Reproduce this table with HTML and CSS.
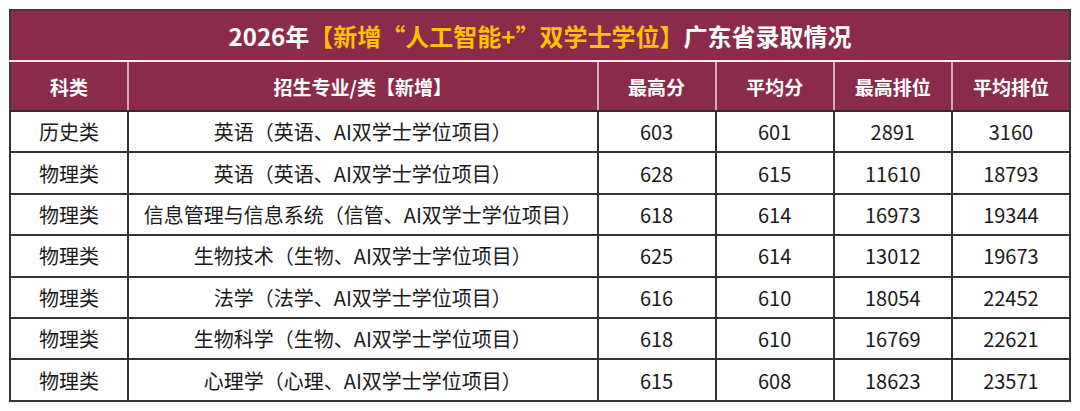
FILE: index.html
```html
<!DOCTYPE html>
<html lang="zh-CN">
<head>
<meta charset="utf-8">
<title>2026年录取情况</title>
<link rel="stylesheet" href="styles.css">
</head>
<body>
<table class="sheet">
  <colgroup>
    <col class="c-kind">
    <col class="c-major">
    <col class="c-num">
    <col class="c-num">
    <col class="c-num">
    <col class="c-num">
  </colgroup>
  <thead>
    <tr class="title-row">
      <th colspan="6" class="title">2026年<span class="hl">【新增“人工智能+”双学士学位】</span>广东省录取情况</th>
    </tr>
    <tr class="head-row">
      <th>科类</th>
      <th>招生专业/类【新增】</th>
      <th>最高分</th>
      <th>平均分</th>
      <th>最高排位</th>
      <th>平均排位</th>
    </tr>
  </thead>
  <tbody>
    <tr><td>历史类</td><td>英语（英语、AI双学士学位项目）</td><td>603</td><td>601</td><td>2891</td><td>3160</td></tr>
    <tr><td>物理类</td><td>英语（英语、AI双学士学位项目）</td><td>628</td><td>615</td><td>11610</td><td>18793</td></tr>
    <tr><td>物理类</td><td>信息管理与信息系统（信管、AI双学士学位项目）</td><td>618</td><td>614</td><td>16973</td><td>19344</td></tr>
    <tr><td>物理类</td><td>生物技术（生物、AI双学士学位项目）</td><td>625</td><td>614</td><td>13012</td><td>19673</td></tr>
    <tr><td>物理类</td><td>法学（法学、AI双学士学位项目）</td><td>616</td><td>610</td><td>18054</td><td>22452</td></tr>
    <tr><td>物理类</td><td>生物科学（生物、AI双学士学位项目）</td><td>618</td><td>610</td><td>16769</td><td>22621</td></tr>
    <tr><td>物理类</td><td>心理学（心理、AI双学士学位项目）</td><td>615</td><td>608</td><td>18623</td><td>23571</td></tr>
  </tbody>
</table>
</body>
</html>
```

FILE: styles.css
```css
html, body {
  margin: 0;
  padding: 0;
  background: #ffffff;
}

body {
  padding: 9px 0 0 9px;
  font-family: "Noto Sans CJK SC", "Noto Sans", sans-serif;
}

.sheet {
  border-collapse: collapse;
  table-layout: fixed;
  width: 1062px;
  border: 2px solid #3c3c3c;
}

.c-kind { width: 118px; }
.c-major { width: 469px; }
.c-num { width: 118px; }

.title-row { height: 51px; }

.title {
  background: #8a2b4b;
  color: #ffffff;
  font-size: 24px;
  font-weight: 700;
  text-align: center;
  padding: 0;
  border: 2px solid #3c3c3c;
  border-bottom: 2px solid #f3e6ea;
}

.hl { color: #ffc000; }

.head-row { height: 50px; }

.head-row th {
  background: #8a2b4b;
  color: #ffffff;
  font-size: 19px;
  font-weight: 700;
  padding: 0;
  text-align: center;
  border-left: 2px solid #d7a9ba;
  border-right: 2px solid #d7a9ba;
  border-top: 2px solid #f3e6ea;
  border-bottom: 2px solid #2e2e2e;
}

.head-row th:first-child { border-left: 2px solid #3c3c3c; }
.head-row th:last-child { border-right: 2px solid #3c3c3c; }

tbody tr { height: 41.4px; }

tbody td {
  color: #1a1a1a;
  font-size: 20px;
  text-align: center;
  padding: 0;
  border: 2px solid #333333;
}
```
